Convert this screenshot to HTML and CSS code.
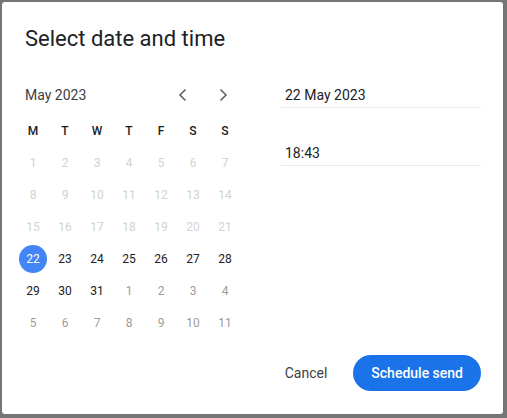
FILE: index.html
```html
<!DOCTYPE html>
<html lang="en">
<head>
  <meta charset="utf-8">
  <title>Select date and time</title>
  <link rel="stylesheet" href="styles.css">
</head>
<body>
  <div class="dialog">
    <div class="title">Select date and time</div>
    <div class="body">
      <div class="calendar">
        <div class="month">
          <div class="month-label">May 2023</div>
          <div class="nav">
            <div class="nav-btn">
              <svg width="10" height="14" viewBox="0 0 10 14"><path d="M7.5 1.5 2 7l5.5 5.5" fill="none" stroke="#5f6368" stroke-width="1.6"/></svg>
            </div>
            <div class="nav-btn">
              <svg width="10" height="14" viewBox="0 0 10 14"><path d="M2.5 1.5 8 7l-5.5 5.5" fill="none" stroke="#5f6368" stroke-width="1.6"/></svg>
            </div>
          </div>
        </div>
        <div class="grid">
          <div class="head">M</div><div class="head">T</div><div class="head">W</div><div class="head">T</div><div class="head">F</div><div class="head">S</div><div class="head">S</div>

          <div class="day past">1</div><div class="day past">2</div><div class="day past">3</div><div class="day past">4</div><div class="day past">5</div><div class="day past">6</div><div class="day past">7</div>
          <div class="day past">8</div><div class="day past">9</div><div class="day past">10</div><div class="day past">11</div><div class="day past">12</div><div class="day past">13</div><div class="day past">14</div>
          <div class="day past">15</div><div class="day past">16</div><div class="day past">17</div><div class="day past">18</div><div class="day past">19</div><div class="day past">20</div><div class="day past">21</div>
          <div class="day"><span class="selected">22</span></div><div class="day">23</div><div class="day">24</div><div class="day">25</div><div class="day">26</div><div class="day">27</div><div class="day">28</div>
          <div class="day">29</div><div class="day">30</div><div class="day">31</div><div class="day other">1</div><div class="day other">2</div><div class="day other">3</div><div class="day other">4</div>
          <div class="day other">5</div><div class="day other">6</div><div class="day other">7</div><div class="day other">8</div><div class="day other">9</div><div class="day other">10</div><div class="day other">11</div>
        </div>
      </div>
      <div class="fields">
        <div class="field">22 May 2023</div>
        <div class="field time">18:43</div>
      </div>
    </div>
    <div class="footer">
      <div class="btn-text">Cancel</div>
      <div class="btn-primary">Schedule send</div>
    </div>
  </div>
</body>
</html>
```

FILE: styles.css
```css
html,
body {
  margin: 0;
  height: 100%;
}

body {
  background: #767676;
  font-family: Roboto, "Liberation Sans", sans-serif;
  color: #202124;
  padding: 2px 4px 4px 2px;
  box-sizing: border-box;
}

.dialog {
  width: 501px;
  height: 412px;
  box-sizing: border-box;
  background: #FFFFFF;
  border-radius: 3px;
  padding: 23px 22px 23px 15px;
  display: flex;
  flex-direction: column;
}

.title {
  font-size: 22px;
  line-height: 28px;
  padding-left: 8px;
  color: #202124;
}

.body {
  display: flex;
  margin-top: 26px;
}

.calendar {
  width: 224px;
}

.month {
  display: flex;
  align-items: center;
  justify-content: space-between;
  height: 32px;
  margin-bottom: 4px;
}

.month-label {
  padding-left: 8px;
  font-size: 14px;
  color: #3c4043;
}

.nav {
  display: flex;
  gap: 8px;
  margin-right: 2px;
}

.nav-btn {
  width: 32px;
  height: 32px;
  display: flex;
  align-items: center;
  justify-content: center;
}

.grid {
  display: grid;
  grid-template-columns: repeat(7, 32px);
  grid-auto-rows: 32px;
}

.head,
.day {
  display: flex;
  align-items: center;
  justify-content: center;
  font-size: 12px;
}

.head {
  font-weight: 500;
  color: #202124;
}

.day {
  color: #202124;
}

.day.past {
  color: #d2d2d2;
}

.day.other {
  color: #a09b97;
}

.selected {
  width: 28px;
  height: 28px;
  border-radius: 50%;
  background: #4285F4;
  color: #FFFFFF;
  display: flex;
  align-items: center;
  justify-content: center;
}

.fields {
  margin-left: 40px;
  width: 200px;
}

.field {
  font-size: 14px;
  line-height: 20px;
  padding: 6px 4px 2px;
  border-bottom: 1px solid #e8eaed;
}

.field.time {
  margin-top: 29px;
}

.footer {
  margin-top: auto;
  display: flex;
  justify-content: flex-end;
  align-items: center;
  gap: 8px;
}

.btn-text {
  padding: 0 18px;
  height: 36px;
  line-height: 36px;
  font-size: 14px;
  color: #3c4043;
}

.btn-primary {
  height: 36px;
  line-height: 36px;
  padding: 0 18px;
  border-radius: 18px;
  background: #1A73E8;
  color: #FFFFFF;
  font-size: 14px;
  font-weight: 500;
}
```
